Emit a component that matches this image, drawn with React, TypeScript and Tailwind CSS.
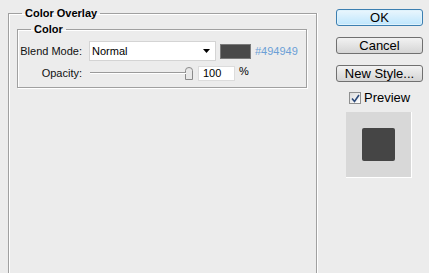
import React from "react";

export default function App() {
  return (
    <div
      className="w-[429px] h-[273px] bg-[#ececec] flex overflow-hidden text-[11px] text-black"
      style={{ fontFamily: '"Liberation Sans", Arial, sans-serif' }}
    >
      {/* Left panel */}
      <div className="w-[318px] pl-[8px] flex flex-col shrink-0">
        <fieldset className="mt-[6px] w-[309px] flex-1 border-t border-l border-r border-[#a0a0a0] pl-[8px] shadow-[inset_1px_1px_0_#fff,1px_0_0_#fff]">
          <legend className="ml-[5px] px-[3px] font-bold leading-[14px] h-[14px]">Color Overlay</legend>
          <fieldset className="mt-[2px] w-[290px] h-[66px] border border-[#a0a0a0] pl-[0px] shadow-[inset_1px_1px_0_#fff,1px_1px_0_#fff]">
            <legend className="ml-[13px] px-[3px] font-bold leading-[14px] h-[14px]">Color</legend>
            <div className="flex flex-col pt-[5px]">
              <div className="flex items-center h-[20px]">
                <div className="w-[64px] text-right text-[#111]">Blend Mode:</div>
                <div className="ml-[7px] w-[127px] h-[20px] bg-white border border-[#d4d4d4] flex items-center pl-[2px] relative">
                  <span>Normal</span>
                  <svg className="absolute left-[113px] top-[7px]" width="8" height="5" viewBox="0 0 8 5">
                    <path d="M0 0 H7 L3.5 4 Z" fill="#000" />
                  </svg>
                </div>
                <div className="ml-[4px] w-[31px] h-[15px] bg-[#494949] border border-[#7a7a7a]" />
                <div className="ml-[4px] text-[#6b9fd6]">#494949</div>
              </div>
              <div className="flex items-center h-[16px] mt-[4px]">
                <div className="w-[64px] text-right text-[#111]">Opacity:</div>
                <div className="ml-[8px] w-[96px] h-[12px] flex items-center relative">
                  <div className="w-full h-[2px] border-t border-[#9a9a9a] border-b border-b-white" />
                </div>
                <svg width="8" height="13" viewBox="0 0 8 13" className="-ml-[1px]">
                  <path d="M0.5 3.5 Q0.5 0.5 4 0.5 Q7.5 0.5 7.5 3.5 V12.5 H0.5 Z" fill="#e8e8e8" stroke="#8a8a8a" />
                </svg>
                <div className="ml-[5px] w-[37px] h-[15px] bg-white border border-[#dcdcdc] flex items-center pl-[4px]">
                  100
                </div>
                <div className="ml-[4px] -mt-[3px]">%</div>
              </div>
            </div>
          </fieldset>
        </fieldset>
      </div>

      {/* Right column */}
      <div className="flex flex-col pl-[18px] pt-[9px] text-[13px]">
        <button className="w-[87px] h-[17px] leading-[15px] rounded-[3px] border border-[#3c7fb1] bg-gradient-to-b from-[#eaf6fd] to-[#bee6fd] shadow-[inset_0_0_0_1px_#dff2fc] text-black">
          OK
        </button>
        <button className="mt-[11px] w-[87px] h-[17px] leading-[15px] rounded-[3px] border border-[#707070] bg-gradient-to-b from-[#f2f2f2] to-[#d5d5d5] text-black">
          Cancel
        </button>
        <button className="mt-[11px] w-[87px] h-[17px] leading-[15px] rounded-[3px] border border-[#707070] bg-gradient-to-b from-[#f2f2f2] to-[#d5d5d5] text-black">
          New Style...
        </button>
        <div className="mt-[9px] flex items-center pl-[13px] h-[14px]">
          <div className="w-[12px] h-[12px] border border-[#8e8f8f] bg-gradient-to-br from-[#dcdcdc] to-white flex items-center justify-center">
            <svg width="9" height="9" viewBox="0 0 9 9">
              <path d="M1 4.5 L3.5 7.5 L8 1" fill="none" stroke="#2c4a7a" strokeWidth="1.6" />
            </svg>
          </div>
          <span className="ml-[3px]">Preview</span>
        </div>
        <div className="mt-[7px] ml-[10px] w-[66px] h-[66px] bg-[#d8d8d8] border-r border-b border-white flex items-center justify-center">
          <div className="w-[33px] h-[33px] bg-[#454545] rounded-[2px]" />
        </div>
      </div>
    </div>
  );
}
